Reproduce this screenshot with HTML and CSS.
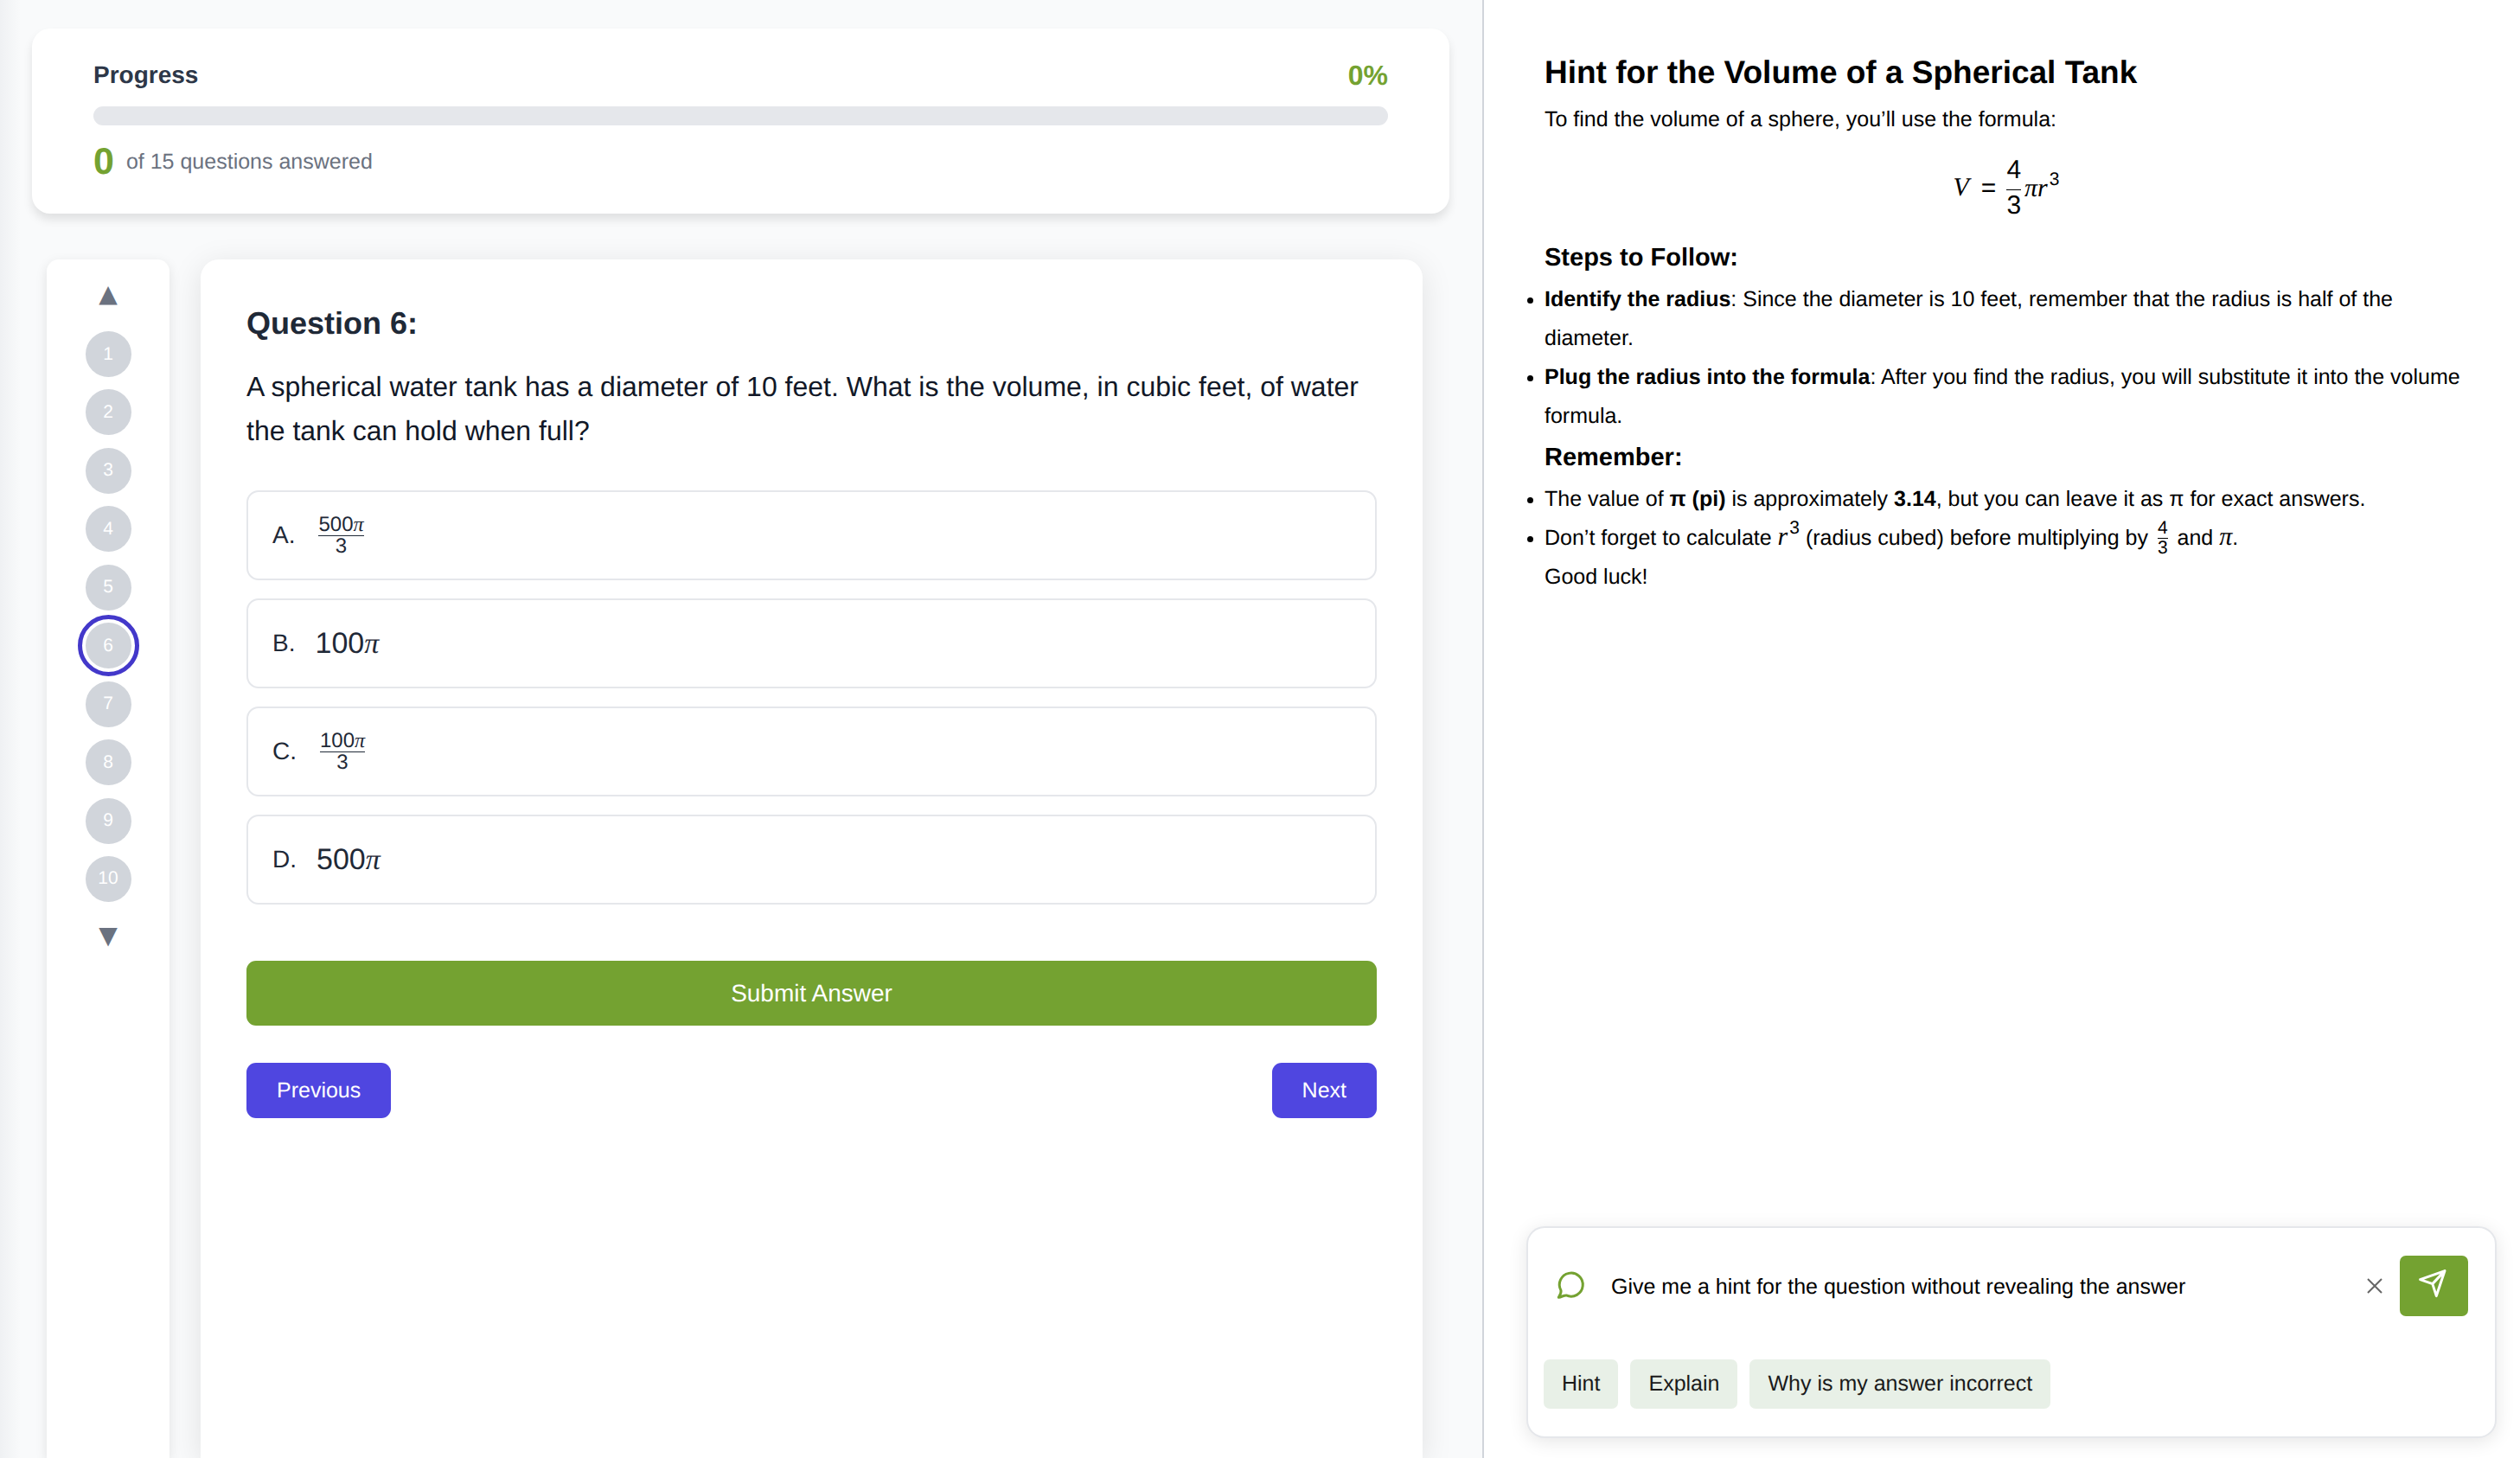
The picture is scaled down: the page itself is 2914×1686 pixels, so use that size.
FILE: index.html
```html
<!DOCTYPE html>
<html lang="en">
<head>
<meta charset="utf-8">
<title>Practice quiz</title>
<link rel="stylesheet" href="styles.css">
</head>
<body>
<div class="app">
  <main class="quiz">
    <section class="progress-card">
      <div class="progress-head">
        <h2 class="progress-title">Progress</h2>
        <span class="progress-percent">0%</span>
      </div>
      <div class="progress-track" role="progressbar" aria-valuenow="0" aria-valuemin="0" aria-valuemax="100" aria-label="Progress"></div>
      <p class="progress-count"><strong class="progress-number">0</strong><span>of 15 questions answered</span></p>
    </section>

    <div class="workspace">
      <nav class="question-nav" aria-label="Questions">
        <button class="nav-arrow" type="button" aria-label="Scroll up">▲</button>
        <ol class="nav-list">
          <li><button class="nav-dot" type="button">1</button></li>
          <li><button class="nav-dot" type="button">2</button></li>
          <li><button class="nav-dot" type="button">3</button></li>
          <li><button class="nav-dot" type="button">4</button></li>
          <li><button class="nav-dot" type="button">5</button></li>
          <li><button class="nav-dot nav-dot-current" type="button" aria-current="step">6</button></li>
          <li><button class="nav-dot" type="button">7</button></li>
          <li><button class="nav-dot" type="button">8</button></li>
          <li><button class="nav-dot" type="button">9</button></li>
          <li><button class="nav-dot" type="button">10</button></li>
        </ol>
        <button class="nav-arrow" type="button" aria-label="Scroll down">▼</button>
      </nav>

      <section class="question-card">
        <h1 class="question-title">Question 6:</h1>
        <p class="question-text">A spherical water tank has a diameter of 10 feet. What is the volume, in cubic feet, of water the tank can hold when full?</p>
        <div class="options">
          <button class="option" type="button"><span>A.</span><span class="math"><span class="frac frac-small"><span class="frac-top">500<i>π</i></span><span>3</span></span></span></button>
          <button class="option" type="button"><span>B.</span><span class="math">100<i>π</i></span></button>
          <button class="option" type="button"><span>C.</span><span class="math"><span class="frac frac-small"><span class="frac-top">100<i>π</i></span><span>3</span></span></span></button>
          <button class="option" type="button"><span>D.</span><span class="math">500<i>π</i></span></button>
        </div>
        <button class="submit" type="button">Submit Answer</button>
        <div class="pager">
          <button class="page-button" type="button">Previous</button>
          <button class="page-button" type="button">Next</button>
        </div>
      </section>
    </div>
  </main>

  <aside class="assistant">
    <article class="hint">
      <h2 class="hint-title">Hint for the Volume of a Spherical Tank</h2>
      <p>To find the volume of a sphere, you’ll use the formula:</p>
      <div class="formula"><i>V</i><span class="equals">=</span><span class="frac"><span class="frac-top">4</span><span>3</span></span><span><i>πr</i><sup>3</sup></span></div>
      <h3 class="hint-subtitle">Steps to Follow:</h3>
      <ul>
        <li><strong>Identify the radius</strong>: Since the diameter is 10 feet, remember that the radius is half of the diameter.</li>
        <li><strong>Plug the radius into the formula</strong>: After you find the radius, you will substitute it into the volume formula.</li>
      </ul>
      <h3 class="hint-subtitle">Remember:</h3>
      <ul>
        <li>The value of <strong>π (pi)</strong> is approximately <strong>3.14</strong>, but you can leave it as π for exact answers.</li>
        <li>Don’t forget to calculate <span class="inline-math"><i>r</i><sup>3</sup></span> (radius cubed) before multiplying by <span class="inline-math"><span class="frac frac-small"><span class="frac-top">4</span><span>3</span></span></span> and <span class="inline-math"><i>π</i></span>.</li>
      </ul>
      <p>Good luck!</p>
    </article>

    <form class="composer">
      <div class="composer-row">
        <svg class="chat-icon" viewBox="0 0 36 36" aria-hidden="true"><path d="M7 23.2A13.5 13.5 0 1 1 13.2 28.9C10.5 28.7 8 30.6 4.3 31.3C5.8 28.5 7.6 26 7 23.2Z"/></svg>
        <input class="composer-input" type="text" aria-label="Message" value="Give me a hint for the question without revealing the answer">
        <button class="clear" type="button" aria-label="Clear"><svg viewBox="0 0 18 18" aria-hidden="true"><path d="M1 1L17 17M17 1L1 17"/></svg></button>
        <button class="send" type="button" aria-label="Send"><svg viewBox="0 0 36 36" aria-hidden="true"><path d="M32 3.6L22.3 32.6L17.8 18.6L3.6 13.6ZM32 3.6L17.8 18.6"/></svg></button>
      </div>
      <div class="chips">
        <button class="chip" type="button">Hint</button>
        <button class="chip" type="button">Explain</button>
        <button class="chip" type="button">Why is my answer incorrect</button>
      </div>
    </form>
  </aside>
</div>
</body>
</html>
```
FILE: styles.css
```css
*, *::before, *::after { box-sizing: border-box; }

body {
  margin: 0;
  font-family: "Liberation Sans", Arial, sans-serif;
  font-size: 25px;
  text-rendering: geometricPrecision;
  color: #000;
  background: #fff;
}

h1, h2, h3, p, ul, ol { margin: 0; padding: 0; }

button {
  padding: 0;
  border: 0;
  background: none;
  font: inherit;
  text-rendering: inherit;
  color: inherit;
  cursor: pointer;
}

.app {
  display: grid;
  grid-template-columns: 1716fr 1198fr;
  height: 100vh;
  overflow: hidden;
}

/* Quiz column */
.quiz {
  display: flex;
  flex-direction: column;
  gap: 53px;
  min-width: 0;
  padding: 33px 38px 0 37px;
  border-right: 2px solid #d1d5db;
  background: linear-gradient(to right, #eff1f3, #f9fafb 24px);
}

.progress-card {
  padding: 36px 71px;
  border-radius: 21px;
  background: #fff;
  box-shadow: 0 7px 11px rgba(0, 0, 0, 0.1);
}

.progress-head {
  display: flex;
  align-items: center;
  justify-content: space-between;
  height: 36px;
  margin-bottom: 18px;
}

.progress-title { font-size: 28px; color: #2d3748; }
.progress-percent { font-size: 32px; font-weight: 700; color: #74a231; }

.progress-track {
  height: 22px;
  border-radius: 11px;
  background: #e5e7eb;
}

.progress-count {
  display: flex;
  align-items: center;
  gap: 14px;
  height: 48px;
  margin: 18px 0 0;
  color: #6b7280;
}

.progress-number { font-size: 43px; color: #74a231; }

.workspace {
  display: flex;
  flex: 1;
  gap: 36px;
  padding: 0 31px 0 17px;
}

.question-nav {
  display: flex;
  flex: none;
  flex-direction: column;
  align-items: center;
  width: 142px;
  padding: 18px 0;
  border-radius: 14px 14px 0 0;
  background: #fff;
  box-shadow: 0 4px 14px rgba(0, 0, 0, 0.1);
}

.nav-arrow {
  height: 44px;
  font-family: "DejaVu Sans", sans-serif;
  font-size: 28px;
  line-height: 44px;
  color: #6b7280;
}

.nav-list {
  display: flex;
  flex-direction: column;
  justify-content: space-between;
  height: 660px;
  margin: 21px 0 17px;
  list-style: none;
}

.nav-dot {
  display: block;
  width: 53px;
  height: 53px;
  border-radius: 50%;
  background: #d1d5db;
  font-size: 21px;
  color: #fff;
}

.nav-dot-current {
  outline: 5px solid #4338ca;
  outline-offset: 4px;
}

.question-card {
  flex: 1;
  padding: 54px 53px;
  border-radius: 21px 21px 0 0;
  background: #fff;
  box-shadow: 0 7px 36px rgba(0, 0, 0, 0.1);
}

.question-title {
  font-size: 36px;
  line-height: 40px;
  color: #1f2937;
}

.question-text {
  margin-top: 28px;
  font-size: 32px;
  line-height: 51px;
  color: #111827;
}

.options {
  display: grid;
  gap: 21px;
  margin-top: 43px;
  font-size: 28px;
  color: #1f2937;
}

.option {
  display: flex;
  align-items: center;
  gap: 23px;
  height: 104px;
  padding: 0 28px;
  border: 2px solid #e5e7eb;
  border-radius: 14px;
  background: #fff;
}

.submit {
  width: 100%;
  height: 75px;
  margin-top: 65px;
  border-radius: 11px;
  background: #74a231;
  font-size: 28px;
  color: #fff;
}

.pager {
  display: flex;
  justify-content: space-between;
  margin-top: 43px;
}

.page-button {
  height: 64px;
  padding: 0 35px;
  border-radius: 11px;
  background: #4f46e0;
  color: #fff;
}

/* Mathematical notation */
.math i, .inline-math i, .formula i {
  font-family: "Liberation Serif", "Times New Roman", serif;
  font-style: italic;
  line-height: 1;
}

.math { font-size: 34px; }
.inline-math { font-size: 30px; line-height: 1; }

.frac {
  display: inline-flex;
  flex-direction: column;
  align-items: center;
  vertical-align: middle;
  margin: 0 4px;
  font-size: 30px;
  line-height: 35px;
}

.frac-top {
  padding-bottom: 5px;
  border-bottom: 1px solid currentColor;
}

.frac-small .frac-top { padding-bottom: 0; }
.math .frac-small { font-size: 24px; line-height: 24px; }
.inline-math .frac-small { font-size: 21px; line-height: 22px; }

sup {
  margin-left: 2px;
  font-size: 21px;
  line-height: 1;
  vertical-align: 13px;
}

/* Assistant column */
.assistant {
  display: flex;
  flex-direction: column;
  justify-content: space-between;
  min-width: 0;
  padding: 61px 27px 23px 49px;
}

.hint {
  padding: 0 33px 0 21px;
  line-height: 45px;
}

.hint-title {
  margin-bottom: 10px;
  font-size: 37px;
}

.hint-subtitle {
  margin: 3px 0;
  font-size: 29px;
}

.hint li::marker { font-size: 22px; }

.formula {
  display: flex;
  align-items: center;
  justify-content: center;
  height: 112px;
  font-size: 30px;
}

.equals { margin: 0 8px 0 14px; }

.composer {
  padding: 32px 31px 32px 18px;
  border: 2px solid #e5e7eb;
  border-radius: 21px;
  background: #fff;
  box-shadow: 0 4px 21px rgba(0, 0, 0, 0.1);
}

.composer-row {
  display: flex;
  align-items: center;
  height: 70px;
}

.chat-icon {
  flex: none;
  width: 36px;
  height: 36px;
  margin: 0 29px 0 13px;
  fill: none;
  stroke: #74a231;
  stroke-width: 3;
  stroke-linecap: round;
  stroke-linejoin: round;
}

.composer-input {
  flex: 1;
  min-width: 0;
  padding: 2px 0 0;
  border: 0;
  outline: 0;
  background: none;
  font: inherit;
  text-rendering: inherit;
  color: #000;
}

.clear { padding: 0 20px; }

.clear svg {
  display: block;
  width: 18px;
  height: 18px;
  fill: none;
  stroke: #666;
  stroke-width: 2;
}

.send {
  display: grid;
  place-items: center;
  width: 79px;
  height: 70px;
  padding: 0 4px 6px 0;
  border-radius: 7px;
  background: #74a231;
}

.send svg {
  width: 36px;
  height: 36px;
  fill: none;
  stroke: #fff;
  stroke-width: 3;
  stroke-linecap: round;
  stroke-linejoin: round;
}

.chips {
  display: flex;
  gap: 14px;
  margin-top: 50px;
}

.chip {
  height: 57px;
  padding: 0 21px;
  border-radius: 7px;
  background: #e8f0e7;
  color: #1a1a1a;
}
```
